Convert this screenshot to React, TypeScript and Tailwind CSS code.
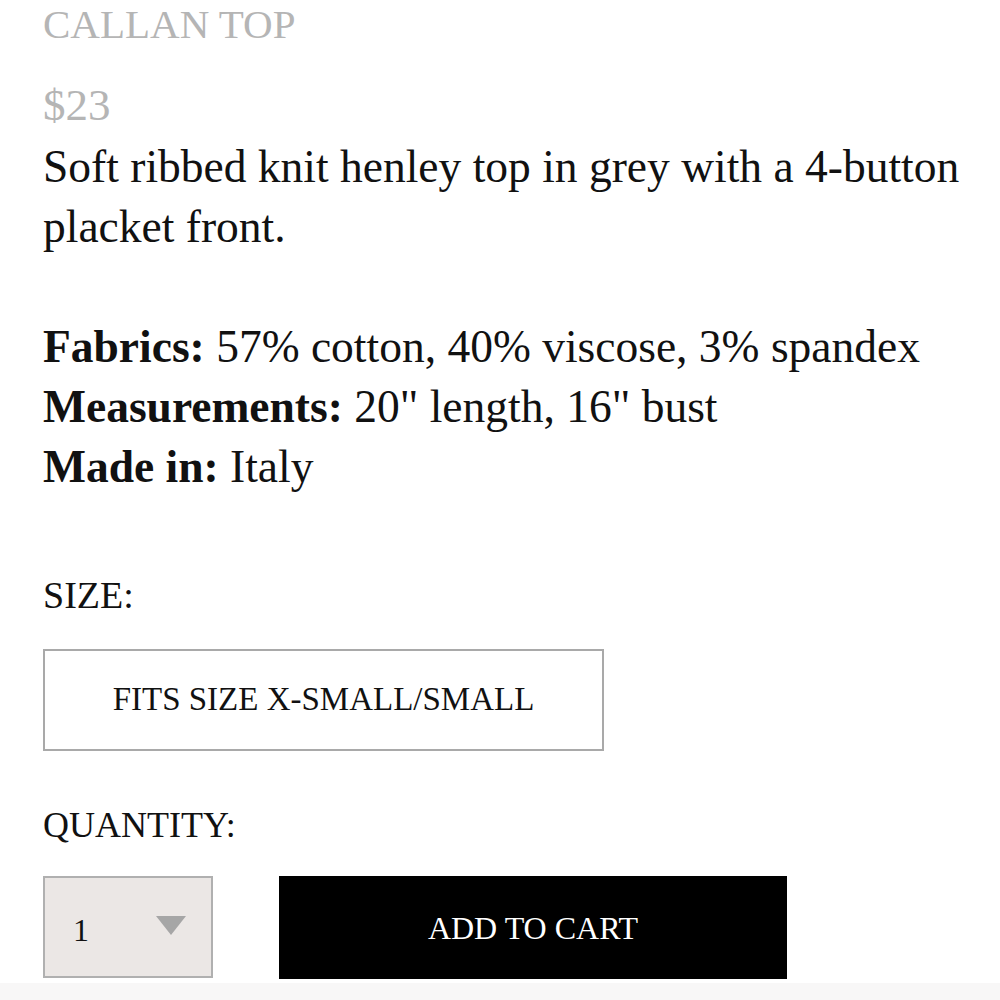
import React from 'react';

const serif = { fontFamily: '"Liberation Serif", "Times New Roman", serif' };

const details = [
  { label: 'Fabrics:', value: '57% cotton, 40% viscose, 3% spandex' },
  { label: 'Measurements:', value: '20" length, 16" bust' },
  { label: 'Made in:', value: 'Italy' },
];

const App: React.FC = () => {
  return (
    <div className="flex min-h-[1000px] w-[1000px] flex-col overflow-hidden bg-white text-[#111]" style={serif}>
      <main className="flex-1 px-[43px]">
        <h1 className="text-[41px] font-normal leading-[48px] text-[#b5b5b5]">CALLAN TOP</h1>
        <p className="mt-[33px] text-[45px] leading-[48px] text-[#b5b5b5]">$23</p>

        <p className="mt-[8px] w-[930px] text-[45.5px] leading-[60px]">
          Soft ribbed knit henley top in grey with a 4-button placket front.
        </p>

        <div className="mt-[60px] text-[45.5px] leading-[60px]">
          {details.map((d) => (
            <div key={d.label}>
              <span className="font-bold">{d.label}</span> {d.value}
            </div>
          ))}
        </div>

        <p className="mt-[76px] text-[38px] leading-[44px]">SIZE:</p>

        <div className="mt-[32px] flex h-[102px] w-[561px] items-center justify-center border-2 border-[#a9a9a9] text-[33px]">
          FITS SIZE X-SMALL/SMALL
        </div>

        <p className="mt-[52px] text-[36px] leading-[44px]">QUANTITY:</p>

        <div className="mt-[29px] flex items-stretch gap-[66px]">
          <div className="flex h-[102px] w-[170px] items-center border-2 border-[#b0b0b0] bg-[#ebe7e5] pl-[28px] pr-[25px]">
            <span className="pt-[6px] text-[32px]">1</span>
            <svg className="ml-auto mb-[4px] h-[19px] w-[30px]" viewBox="0 0 30 19">
              <polygon points="0,0 30,0 15,19" fill="#a6a6a6" />
            </svg>
          </div>
          <button
            type="button"
            className="flex h-[103px] w-[508px] items-center justify-center bg-black text-[32px] text-white"
          >
            ADD TO CART
          </button>
        </div>
      </main>
      <div className="mt-[3px] h-[17px] w-full bg-[#f8f7f7]" />
    </div>
  );
};

export default App;
